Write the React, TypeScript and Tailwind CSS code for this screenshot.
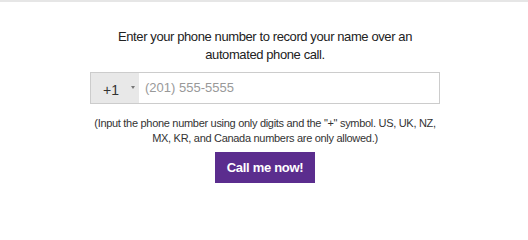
export default function App() {
  return (
    <div className="h-[207px] bg-white border-t-2 border-[#e6e6e6] font-['Liberation_Sans',Arial,sans-serif]">
      <div className="mx-auto flex w-[350px] translate-x-[1px] flex-col items-center pt-[26px] text-center">
        <p className="w-[310px] text-[13px] leading-[18px] tracking-[-0.4px] text-[#222]">
          Enter your phone number to record your name over an automated phone call.
        </p>

        <div className="mt-2 flex h-8 w-[350px] border border-[#cccccc] bg-white">
          <div className="flex w-[48px] items-center bg-[#e8e8e8] pl-[12px] pt-[3px]">
            <span className="text-[14px] leading-none text-[#333]">+1</span>
            <span className="ml-[12px] mb-[4px] h-0 w-0 border-x-[2px] border-t-[3px] border-x-transparent border-t-[#777]" />
          </div>
          <input
            type="tel"
            placeholder="(201) 555-5555"
            className="min-w-0 flex-1 bg-transparent pl-[6px] text-[13px] text-[#333] outline-none placeholder:text-[#999]"
          />
        </div>

        <p className="mt-3 text-[11px] leading-[15px] tracking-[-0.3px] text-[#333]">
          (Input the phone number using only digits and the "+" symbol. US, UK, NZ, MX, KR, and Canada numbers are
          only allowed.)
        </p>

        <button className="mt-[6px] h-[31px] w-[100px] bg-[#5b2d8e] text-[13px] font-bold tracking-[-0.3px] text-white">
          Call me now!
        </button>
      </div>
    </div>
  )
}
